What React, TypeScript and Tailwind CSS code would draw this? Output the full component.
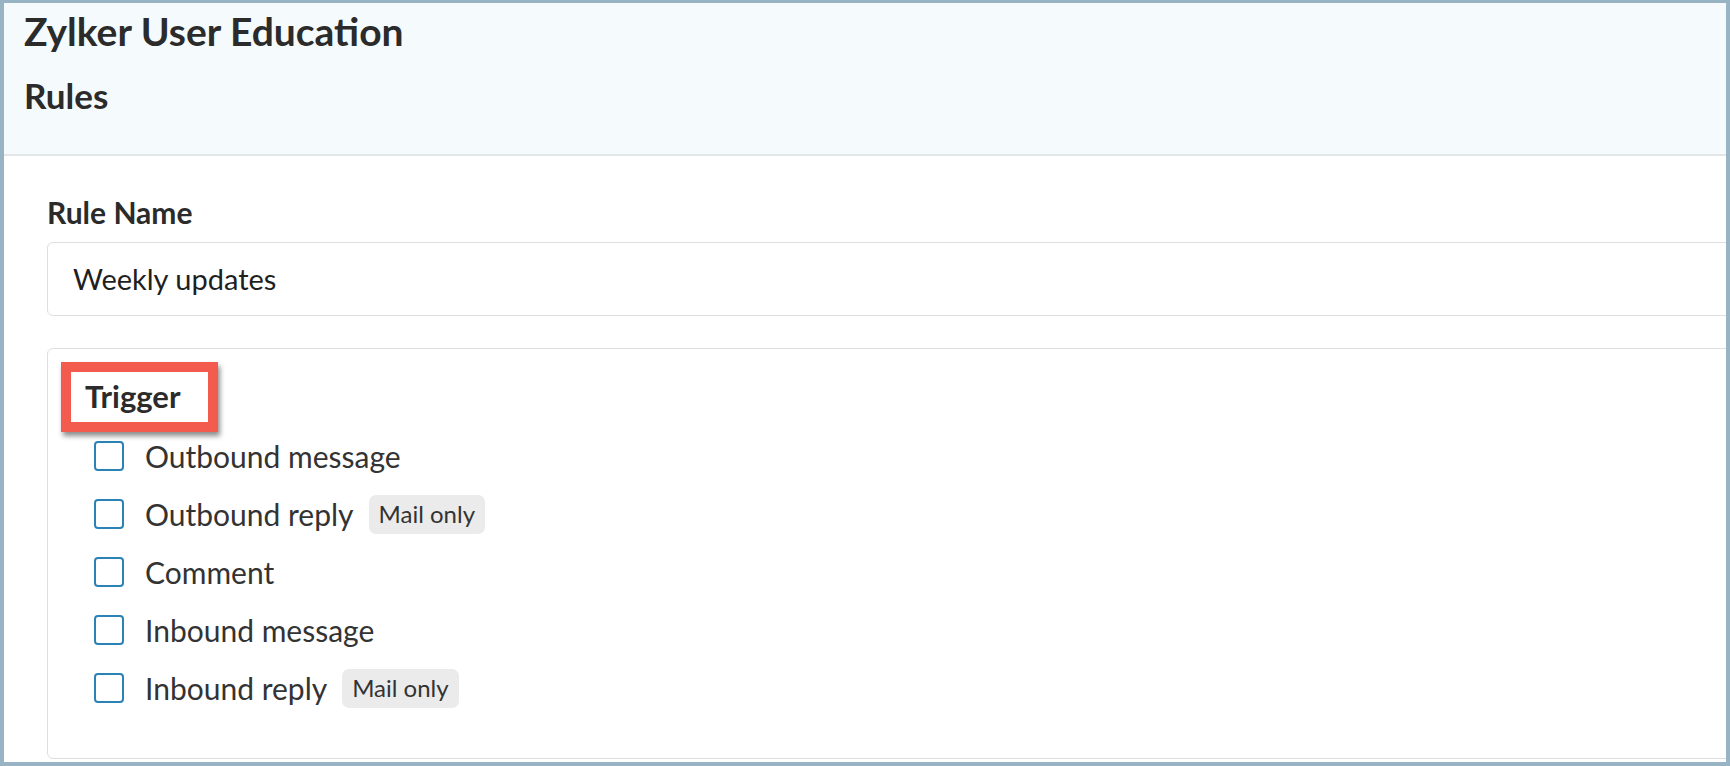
import React from "react"

const triggers = [
  { label: "Outbound message", mailOnly: false },
  { label: "Outbound reply", mailOnly: true },
  { label: "Comment", mailOnly: false },
  { label: "Inbound message", mailOnly: false },
  { label: "Inbound reply", mailOnly: true },
]

function TriggerRow({ label, mailOnly }: { label: string; mailOnly: boolean }) {
  return (
    <label className="flex items-center h-[58px]">
      <span className="w-[30px] h-[30px] border-2 border-[#2a82b7] rounded-[4px] bg-white shrink-0" />
      <span className="ml-[21px] text-[30px] leading-[36px] text-[#333333]">{label}</span>
      {mailOnly && (
        <span className="ml-[15px] h-[39px] px-[10px] flex items-center rounded-[7px] bg-[#ebebeb] text-[24px] text-[#333333]">
          Mail only
        </span>
      )}
    </label>
  )
}

export default function App() {
  return (
    <div className="w-[1730px] h-[766px] bg-[#98b3c3] pt-[3px] px-[4px] pb-[4px] font-['Lato',sans-serif]">
      <div className="h-full bg-white overflow-hidden flex flex-col">
        <header className="h-[153px] shrink-0 bg-[#f5fafd] border-b-2 border-[#e3e6e8] pl-[20px] pt-[5px]">
          <h1 className="text-[39px] leading-[46px] font-bold text-[#2b2b2b]">Zylker User Education</h1>
          <h2 className="mt-[20px] text-[35px] leading-[42px] font-bold text-[#2b2b2b]">Rules</h2>
        </header>

        <main className="flex-1 flex flex-col pl-[43px] -mr-[40px] pt-[38px] pb-[3px]">
          <div className="text-[30px] leading-[36px] font-bold text-[#2b2b2b]">Rule Name</div>
          <div className="mt-[12px] h-[74px] shrink-0 border border-[#dedede] rounded-[6px] flex items-center pl-[25px]">
            <span className="text-[29px] leading-[36px] text-[#1f1f1f]">Weekly updates</span>
          </div>

          <section className="mt-[32px] flex-1 border border-[#dedede] rounded-[6px] pl-[37px] pt-[29px]">
            <div className="relative w-fit">
              <div className="text-[31px] leading-[37px] font-bold text-[#2b2b2b]">Trigger</div>
              <div className="absolute -left-[24px] -top-[16px] -right-[38px] -bottom-[17px] border-[10px] border-[#f35b4e] shadow-[2px_4px_5px_rgba(0,0,0,0.45)] pointer-events-none" />
            </div>
            <div className="mt-[12px] ml-[9px] flex flex-col">
              {triggers.map((t) => (
                <TriggerRow key={t.label} label={t.label} mailOnly={t.mailOnly} />
              ))}
            </div>
          </section>
        </main>
      </div>
    </div>
  )
}
